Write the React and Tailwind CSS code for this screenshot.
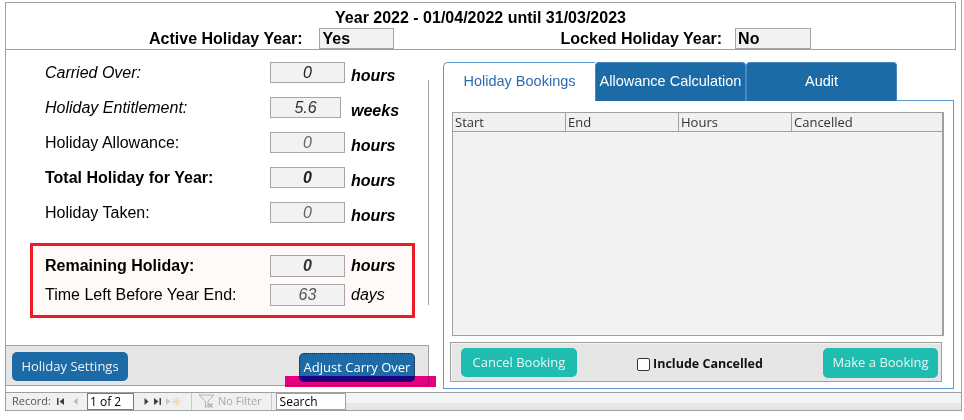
import { useState } from 'react'

const arial = "font-['Liberation_Sans',Arial,sans-serif]"
const segoe = "font-['Open_Sans','Noto_Sans',sans-serif]"

const fields = [
  { label: 'Carried Over:', labelClass: 'italic', value: '0', valueClass: 'italic text-[#222]', unit: 'hours', unitClass: 'font-bold italic', boxW: 'w-[75px]', gap: 'ml-[6px]' },
  { label: 'Holiday Entitlement:', labelClass: 'italic', value: '5.6', valueClass: 'italic text-[#333]', unit: 'weeks', unitClass: 'font-bold italic', boxW: 'w-[71px]', gap: 'ml-[10px]' },
  { label: 'Holiday Allowance:', labelClass: '', value: '0', valueClass: 'italic text-[#666]', unit: 'hours', unitClass: 'font-bold italic', boxW: 'w-[75px]', gap: 'ml-[6px]' },
  { label: 'Total Holiday for Year:', labelClass: 'font-bold', value: '0', valueClass: 'font-bold italic text-[#222]', unit: 'hours', unitClass: 'font-bold italic', boxW: 'w-[75px]', gap: 'ml-[6px]' },
  { label: 'Holiday Taken:', labelClass: '', value: '0', valueClass: 'italic text-[#666]', unit: 'hours', unitClass: 'font-bold italic', boxW: 'w-[75px]', gap: 'ml-[6px]' },
]

function FieldBox({ value, className = '', width = 'w-[75px]', height = 'h-[21px]' }) {
  return (
    <div className={`${width} ${height} flex items-center justify-center border border-[#a6a6a6] bg-[#f2f2f2] text-[16px] leading-none ${className}`}>
      {value}
    </div>
  )
}

function NavIcon({ type }) {
  if (type === 'first') {
    return (
      <svg width="8" height="9" viewBox="0 0 8 9">
        <rect x="0" y="1" width="1.5" height="7" fill="#404040" />
        <path d="M7 1 L2.5 4.5 L7 8 Z" fill="#404040" />
      </svg>
    )
  }
  if (type === 'prev') {
    return (
      <svg width="5" height="9" viewBox="0 0 5 9">
        <path d="M4.5 1 L0.5 4.5 L4.5 8 Z" fill="#b8b8b8" />
      </svg>
    )
  }
  if (type === 'next') {
    return (
      <svg width="5" height="9" viewBox="0 0 5 9">
        <path d="M0.5 1 L4.5 4.5 L0.5 8 Z" fill="#404040" />
      </svg>
    )
  }
  if (type === 'last') {
    return (
      <svg width="8" height="9" viewBox="0 0 8 9">
        <path d="M1 1 L5.5 4.5 L1 8 Z" fill="#404040" />
        <rect x="6.5" y="1" width="1.5" height="7" fill="#404040" />
      </svg>
    )
  }
  return (
    <svg width="18" height="11" viewBox="0 0 18 11">
      <path d="M1 2 L5.5 5.5 L1 9 Z" fill="#c8c8c8" />
      <g stroke="#f2dca0" strokeWidth="1.2">
        <line x1="11.5" y1="1" x2="11.5" y2="10" />
        <line x1="7" y1="5.5" x2="16" y2="5.5" />
        <line x1="8.3" y1="2.3" x2="14.7" y2="8.7" />
        <line x1="14.7" y1="2.3" x2="8.3" y2="8.7" />
      </g>
    </svg>
  )
}

export default function App() {
  const [includeCancelled, setIncludeCancelled] = useState(false)

  return (
    <div className={`h-[420px] w-[964px] bg-white ${arial} text-black`}>
      <div className="ml-[5px] flex h-[411px] w-[957px] flex-col border-r border-[#a0a0a0]">
        <div className="h-[2px]" />

        {/* header */}
        <div className="h-[48px] w-[951px] border border-[#a0a0a0]">
          <div className="h-[25px] pt-[6px] text-center text-[16px] font-bold leading-[18px]">
            Year 2022 - 01/04/2022 until 31/03/2023
          </div>
          <div className="flex h-[21px] items-center text-[16px] font-bold">
            <span className="ml-[143px]">Active Holiday Year:</span>
            <div className="ml-[16px] flex h-[21px] w-[75px] items-center border border-[#a6a6a6] bg-[#f2f2f2] pl-[3px]">Yes</div>
            <span className="ml-[167px]">Locked Holiday Year:</span>
            <div className="ml-[13px] flex h-[21px] w-[76px] items-center border border-[#a6a6a6] bg-[#f2f2f2] pl-[2px]">No</div>
          </div>
        </div>

        {/* body */}
        <div className="flex h-[342px] border-l border-[#a0a0a0]">
          {/* left pane */}
          <div className="flex w-[423px] flex-col">
            <div className="flex h-[295px]">
              <div className="w-[422px] pt-[5px] text-[16px]">
                {fields.map(field => (
                  <div key={field.label} className="flex h-[35px] items-center pl-[39px]">
                    <span className={`w-[225px] ${field.labelClass}`}>{field.label}</span>
                    <FieldBox value={field.value} className={field.valueClass} width={field.boxW} />
                    <span className={`${field.gap} pt-[6px] ${field.unitClass}`}>{field.unit}</span>
                  </div>
                ))}

                <div className="ml-[24px] mt-[13px] h-[75px] w-[385px] border-[3px] border-[#ed1c24] bg-[#fffaf7] pl-[12px] pt-[5px]">
                  <div className="flex h-[29px] items-center">
                    <span className="w-[225px] font-bold">Remaining Holiday:</span>
                    <FieldBox value="0" className="font-bold italic text-[#333]" height="h-[22px]" />
                    <span className="ml-[6px] font-bold italic">hours</span>
                  </div>
                  <div className="flex h-[29px] items-center">
                    <span className="w-[225px]">Time Left Before Year End:</span>
                    <FieldBox value="63" className="italic text-[#555]" height="h-[22px]" />
                    <span className="ml-[6px] italic">days</span>
                  </div>
                </div>
              </div>
              <div className="mt-[30px] h-[225px] w-px bg-[#a0a0a0]" />
            </div>

            <div className={`relative flex h-[41px] justify-between border-y border-r border-[#a0a0a0] bg-[#e6e6e6] pl-[6px] pr-[13px] ${segoe}`}>
              <button type="button" className="mt-[6px] h-[29px] w-[116px] rounded-[5px] bg-[#1c6aa6] text-[13px] text-[#eef4fa]">
                Holiday Settings
              </button>
              <button type="button" className="mt-[7px] h-[29px] w-[116px] rounded-[5px] border border-dotted border-[#0b1f3f] bg-[#1c6aa6] text-[13px] text-white">
                Adjust Carry Over
              </button>
              <div className="pointer-events-none absolute left-[279px] top-[30px] h-[11px] w-[151px] bg-[#e6007e] mix-blend-darken" />
            </div>
          </div>

          {/* right pane: tab control */}
          <div className="ml-[14px] flex w-[511px] flex-col pt-[12px]">
            <div className="flex h-[39px] text-[14.5px]">
              <div className="flex w-[152px] items-center justify-center rounded-tl-[5px] border-l border-t border-[#5b9bd5] bg-white text-[#2a6cb3]">
                Holiday Bookings
              </div>
              <div className="flex w-[151px] items-center justify-center rounded-t-[4px] border border-b-0 border-[#4a86c4] bg-[#1c6aa6] text-white">
                Allowance Calculation
              </div>
              <div className="flex w-[151px] items-center justify-center rounded-t-[4px] border border-b-0 border-[#4a86c4] bg-[#1c6aa6] text-white">
                Audit
              </div>
              <div className="flex-1 border-b border-[#5b9bd5]" />
            </div>

            <div className="h-[288px] border-x border-b border-[#5b9bd5] bg-white pl-[8px] pt-[11px]">
              <div className={`h-[224px] w-[492px] border border-r-2 border-[#a0a0a0] bg-[#f2f2f2] ${segoe}`}>
                <div className="flex h-[19px] border-b border-[#a0a0a0] bg-[#f0f0f0] text-[13px] leading-[19px] text-[#333]">
                  <div className="w-[113px] border-r border-[#a0a0a0] pl-[2px]">Start</div>
                  <div className="w-[113px] border-r border-[#a0a0a0] pl-[2px]">End</div>
                  <div className="w-[113px] border-r border-[#a0a0a0] pl-[2px]">Hours</div>
                  <div className="flex-1 pl-[2px]">Cancelled</div>
                </div>
              </div>

              <div className={`-ml-[2px] mt-[6px] flex h-[40px] w-[492px] items-start justify-between border border-[#a0a0a0] bg-[#e6e6e6] pl-[10px] pr-[3px] shadow-[inset_1px_1px_0_#f4f4f4] ${segoe}`}>
                <button type="button" className="mt-[5px] h-[29px] w-[116px] rounded-[5px] bg-[#1fbcb0] text-[13px] text-[#e6f7f5]">
                  Cancel Booking
                </button>
                <label className="mt-[12px] flex items-center gap-[3px] text-[12.5px] font-bold text-[#111]">
                  <input
                    type="checkbox"
                    checked={includeCancelled}
                    onChange={e => setIncludeCancelled(e.target.checked)}
                    className="h-[13px] w-[13px] appearance-none rounded-[2px] border border-[#333] bg-white"
                  />
                  Include Cancelled
                </label>
                <button type="button" className="mt-[5px] h-[30px] w-[115px] rounded-[5px] bg-[#1fbcb0] text-[13px] text-[#e6f7f5]">
                  Make a Booking
                </button>
              </div>
            </div>
          </div>
        </div>

        {/* record navigation */}
        <div className={`flex h-[19px] items-center border-y border-l border-[#a0a0a0] bg-[#f0f0f0] text-[11px] ${segoe}`}>
          <span className="ml-[6px] text-[#555]">Record:</span>
          <span className="ml-[6px] flex"><NavIcon type="first" /></span>
          <span className="ml-[8px] flex"><NavIcon type="prev" /></span>
          <div className="ml-[9px] flex h-[17px] w-[47px] items-center border border-[#7a7a7a] bg-white pl-[2px] text-[12px] text-black">1 of 2</div>
          <span className="ml-[10px] flex"><NavIcon type="next" /></span>
          <span className="ml-[4px] flex"><NavIcon type="last" /></span>
          <span className="ml-[4px] flex"><NavIcon type="new" /></span>
          <div className="ml-[8px] h-full w-px bg-[#c8c8c8]" />
          <span className="ml-[6px] flex">
            <svg width="18" height="15" viewBox="0 0 18 15">
              <path d="M1 1 H16 L10 7 V12 L7.5 13.5 V7 Z" fill="none" stroke="#b0b0b0" strokeWidth="1" />
              <path d="M10.5 9.5 L14.5 13.5 M14.5 9.5 L10.5 13.5" stroke="#a8a8a8" strokeWidth="1.2" />
            </svg>
          </span>
          <span className="ml-[2px] text-[#a8a8a8]">No Filter</span>
          <div className="ml-[9px] h-full w-px bg-[#c8c8c8]" />
          <div className="ml-[4px] flex h-[17px] w-[70px] items-center border border-[#a0a0a0] bg-white pl-[3px] text-[12px] text-black">Search</div>
          <div className="ml-auto h-full flex-1 bg-[linear-gradient(#f3f4f6_60%,#e5e6e8_60%)]" />
        </div>
      </div>
    </div>
  )
}
